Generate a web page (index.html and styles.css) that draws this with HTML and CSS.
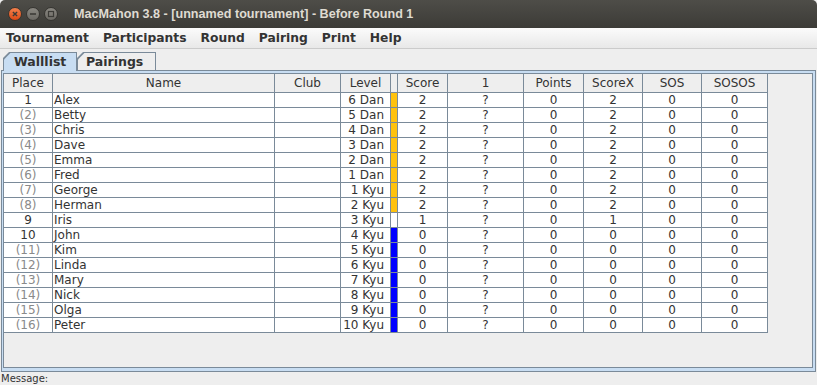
FILE: index.html
```html
<!DOCTYPE html>
<html lang="en">
<head>
<meta charset="UTF-8" />
<title>MacMahon 3.8 - [unnamed tournament] - Before Round 1</title>
<link rel="stylesheet" href="styles.css">
</head>
<body>

<header class="titlebar">
  <div class="win-buttons">
    <svg width="14" height="14" viewBox="0 0 14 14">
      <defs>
        <linearGradient id="closeGrad" x1="0" y1="0" x2="0" y2="1">
          <stop offset="0" stop-color="#f5844f"/>
          <stop offset="1" stop-color="#dc4713"/>
        </linearGradient>
      </defs>
      <circle cx="7" cy="7" r="6.5" fill="url(#closeGrad)" stroke="#34332f"/>
      <path d="M4.9 4.9L9.1 9.1M9.1 4.9L4.9 9.1" stroke="#3c3b37" stroke-width="1.4"/>
    </svg>
    <svg width="14" height="14" viewBox="0 0 14 14">
      <defs>
        <linearGradient id="grayGrad" x1="0" y1="0" x2="0" y2="1">
          <stop offset="0" stop-color="#8b8983"/>
          <stop offset="1" stop-color="#6a6863"/>
        </linearGradient>
      </defs>
      <circle cx="7" cy="7" r="6.5" fill="url(#grayGrad)" stroke="#34332f"/>
      <path d="M4 7H10" stroke="#3c3b37" stroke-width="1.6"/>
    </svg>
    <svg width="14" height="14" viewBox="0 0 14 14">
      <circle cx="7" cy="7" r="6.5" fill="url(#grayGrad)" stroke="#34332f"/>
      <rect x="4.5" y="4.5" width="5" height="5" fill="none" stroke="#3c3b37" stroke-width="1.2"/>
    </svg>
  </div>
  <div class="title">MacMahon 3.8 - [unnamed tournament] - Before Round 1</div>
</header>

<nav class="menubar">
  <span class="menu-item">Tournament</span>
  <span class="menu-item">Participants</span>
  <span class="menu-item">Round</span>
  <span class="menu-item">Pairing</span>
  <span class="menu-item">Print</span>
  <span class="menu-item">Help</span>
</nav>

<div class="tabs">
  <div class="tab active walllist"><span class="tab-label">Walllist</span></div>
  <div class="tab pairings"><span class="tab-label">Pairings</span></div>
</div>

<main class="tab-panel">
  <div class="scroll">
    <table class="walllist-table">
      <colgroup>
        <col class="c-place"><col class="c-name"><col class="c-club"><col class="c-level">
        <col class="c-bar"><col class="c-score"><col class="c-round"><col class="c-points">
        <col class="c-scorex"><col class="c-sos"><col class="c-sosos">
      </colgroup>
      <thead>
        <tr>
          <th>Place</th>
          <th>Name</th>
          <th>Club</th>
          <th>Level</th>
          <th></th>
          <th>Score</th>
          <th>1</th>
          <th>Points</th>
          <th>ScoreX</th>
          <th>SOS</th>
          <th>SOSOS</th>
        </tr>
      </thead>
      <tbody id="wallTbody">
        <!-- rows inserted by script -->
      </tbody>
    </table>
  </div>
</main>

<footer class="status">Message:</footer>

<script>
  const players = [
    ['Alex', '6 Dan', 2], ['Betty', '5 Dan', 2], ['Chris', '4 Dan', 2], ['Dave', '3 Dan', 2],
    ['Emma', '2 Dan', 2], ['Fred', '1 Dan', 2], ['George', '1 Kyu', 2], ['Herman', '2 Kyu', 2],
    ['Iris', '3 Kyu', 1], ['John', '4 Kyu', 0], ['Kim', '5 Kyu', 0], ['Linda', '6 Kyu', 0],
    ['Mary', '7 Kyu', 0], ['Nick', '8 Kyu', 0], ['Olga', '9 Kyu', 0], ['Peter', '10 Kyu', 0]
  ];
  // first player of each score group gets a plain place, the rest are tied
  const firstOfGroup = { 0: 9, 1: 8, 2: 0 };
  const barClass = { 0: 'bar-blue', 1: 'bar-white', 2: 'bar-yellow' };

  const tbody = document.getElementById('wallTbody');
  players.forEach(([name, level, score], i) => {
    const tr = document.createElement('tr');
    const tied = firstOfGroup[score] !== i;
    const cells = [
      [tied ? '(' + (i + 1) + ')' : String(i + 1), tied ? 'place tied' : 'place'],
      [name, 'name'],
      ['', 'club'],
      [level, 'level'],
      ['', 'bar ' + barClass[score]],
      [score, 'num'],
      ['?', 'num'],
      [0, 'num'],
      [score, 'num'],
      [0, 'num'],
      [0, 'num']
    ];
    cells.forEach(([text, cls]) => {
      const td = document.createElement('td');
      td.textContent = text;
      td.className = cls;
      tr.appendChild(td);
    });
    tbody.appendChild(tr);
  });
</script>

</body>
</html>
```

FILE: styles.css
```css
* {
  box-sizing: border-box;
}
body {
  margin: 0;
  width: 817px;
  height: 385px;
  overflow: hidden;
  background: #eeeeee;
  font-family: "DejaVu Sans", sans-serif;
  color: #333333;
}
.titlebar {
  height: 28px;
  display: flex;
  align-items: center;
  padding-left: 8px;
  background: linear-gradient(#4e4d48, #3c3b37);
  border-radius: 5px 5px 0 0;
}
.win-buttons {
  display: flex;
  gap: 4px;
}
.win-buttons svg {
  display: block;
}
.title {
  margin-left: 16px;
  font-family: "Liberation Sans", Arial, sans-serif;
  font-weight: bold;
  font-size: 12.6px;
  color: #dfdbd2;
}
.menubar {
  height: 21px;
  display: flex;
  align-items: center;
  padding-left: 0;
  background: linear-gradient(#fbfbfb, #e8e8e8);
  border-bottom: 1px solid #cbcbcb;
}
.menu-item {
  padding: 0 7px;
  font-weight: bold;
  font-size: 12.3px;
  color: #333333;
}
.menu-item:first-child {
  padding-left: 6px;
}
.tabs {
  height: 21px;
  display: flex;
  align-items: flex-end;
  padding-left: 3px;
}
.tab {
  height: 18px;
  padding: 1px 1px 0 1px;
  background: #7a8a99;
  clip-path: polygon(0 6px, 6px 0, 100% 0, 100% 100%, 0 100%);
}
.tab.active {
  height: 19px;
  margin-bottom: -1px;
  position: relative;
  z-index: 1;
}
.tab-label {
  display: block;
  height: 100%;
  line-height: 17px;
  font-weight: bold;
  font-size: 12.5px;
  color: #333333;
  background: #eeeeee;
  clip-path: polygon(0 6.4px, 6.4px 0, 100% 0, 100% 100%, 0 100%);
}
.tab.active .tab-label {
  line-height: 18px;
  background: #c8ddf2;
}
.walllist {
  width: 74px;
}
.walllist .tab-label {
  padding-left: 10px;
}
.pairings {
  width: 79px;
}
.pairings .tab-label {
  padding-left: 8px;
}
.tab-panel {
  display: block;
  margin-left: 1px;
  width: 815px;
  height: 302px;
  border: 1px solid #7a8a99;
  padding: 2px 2px 3px 1px;
  background: #c8ddf2;
}
.scroll {
  height: 100%;
  border: 1px solid #7a8a99;
  background: #eeeeee;
  overflow: hidden;
}
.walllist-table {
  table-layout: fixed;
  width: 764px;
  border-collapse: separate;
  border-spacing: 0;
  font-size: 12px;
}
.c-place { width: 49px; }
.c-name { width: 222px; }
.c-club { width: 66px; }
.c-level { width: 50px; }
.c-bar { width: 7px; }
.c-score { width: 50px; }
.c-round { width: 76px; }
.c-points { width: 60px; }
.c-scorex { width: 59px; }
.c-sos { width: 59px; }
.c-sosos { width: 66px; }
th {
  height: 19px;
  padding: 0;
  line-height: 18px;
  font-weight: normal;
  text-align: center;
  color: #333333;
  background: #eeeeee;
  border-right: 1px solid #7a8a99;
  border-bottom: 1px solid #7a8a99;
  white-space: nowrap;
  overflow: hidden;
}
td {
  height: 15px;
  padding: 0;
  line-height: 14px;
  background: #ffffff;
  border-right: 1px solid #7a8a99;
  border-bottom: 1px solid #7a8a99;
  white-space: nowrap;
  overflow: hidden;
}
td.place {
  text-align: center;
}
td.place.tied {
  color: #8a8a8a;
}
td.name {
  padding-left: 1px;
}
td.level {
  text-align: right;
  padding-right: 6px;
}
td.num {
  text-align: center;
}
td.bar-yellow {
  background: #ffc20e;
}
td.bar-white {
  background: #ffffff;
}
td.bar-blue {
  background: #0000ff;
}
.status {
  height: 13px;
  line-height: 13px;
  padding-left: 1px;
  font-size: 10px;
  color: #333333;
}
```
